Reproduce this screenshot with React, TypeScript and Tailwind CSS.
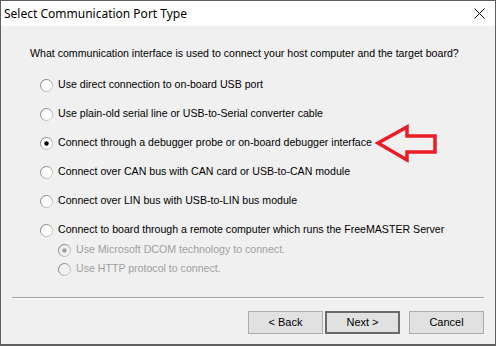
import React from "react";

function Radio({ checked = false, disabled = false }: { checked?: boolean; disabled?: boolean }) {
  return (
    <svg width="13" height="13" viewBox="0 0 13 13" className="shrink-0">
      <defs>
        <linearGradient id="rg" x1="0" y1="0" x2="1" y2="1">
          <stop offset="0" stopColor={disabled ? "#c8c8c8" : "#6d6d6d"} />
          <stop offset="1" stopColor={disabled ? "#e0e0e0" : "#d8d8d8"} />
        </linearGradient>
      </defs>
      <circle cx="6.5" cy="6.5" r="6" fill={disabled ? "#f0f0f0" : "#ffffff"} stroke="url(#rg)" strokeWidth="1" />
      {checked && <circle cx="6.5" cy="6.5" r="2.2" fill={disabled ? "#a0a0a0" : "#000000"} />}
    </svg>
  );
}

function Row({ label, checked, disabled, className }: { label: string; checked?: boolean; disabled?: boolean; className?: string }) {
  return (
    <div className={"flex items-center h-[16px] " + (className ?? "")}>
      <Radio checked={checked} disabled={disabled} />
      <span className={"ml-[5px] whitespace-nowrap " + (disabled ? "text-[#a0a0a0]" : "text-black")}>{label}</span>
    </div>
  );
}

export default function App() {
  return (
    <div
      className="relative w-[496px] h-[346px] border border-[#5f5f5f] border-b-2 bg-[#f0f0f0] flex flex-col overflow-hidden"
      style={{ fontFamily: '"Liberation Sans", Arial, sans-serif' }}
    >
      <div className="h-[25px] bg-white flex items-center justify-between shrink-0">
        <span className="ml-[3px] text-[12px] text-black" style={{ fontFamily: '"Noto Sans", "Open Sans", sans-serif' }}>
          Select Communication Port Type
        </span>
        <svg width="11" height="11" viewBox="0 0 11 11" className="mr-[10px]">
          <path d="M0.5 0.5 L10.5 10.5 M10.5 0.5 L0.5 10.5" stroke="#000" strokeWidth="1" />
        </svg>
      </div>
      <div className="flex-1 flex flex-col text-[10.6px]">
        <div className="mt-[20px] pl-[29px] h-[14px] leading-[14px] text-black whitespace-nowrap">
          What communication interface is used to connect your host computer and the target board?
        </div>
        <div className="flex flex-col pl-[39px]">
          <Row className="mt-[17px]" label="Use direct connection to on-board USB port" />
          <Row className="mt-[13px]" label="Use plain-old serial line or USB-to-Serial converter cable" />
          <Row className="mt-[13px]" label="Connect through a debugger probe or on-board debugger interface" checked />
          <Row className="mt-[13px]" label="Connect over CAN bus with CAN card or USB-to-CAN module" />
          <Row className="mt-[13px]" label="Connect over LIN bus with USB-to-LIN bus module" />
          <Row className="mt-[13px]" label="Connect to board through a remote computer which runs the FreeMASTER Server" />
          <div className="pl-[18px] flex flex-col">
            <Row className="mt-[4px]" label="Use Microsoft DCOM technology to connect." checked disabled />
            <Row className="mt-[3px]" label="Use HTTP protocol to connect." disabled />
          </div>
        </div>
        <div className="mt-auto mx-[11px] h-[2px] border-t border-[#a0a0a0] border-b border-b-white" />
        <div className="flex justify-end pr-[11px] mt-[12px] mb-[10px] text-[11px]">
          <button className="w-[75px] h-[23px] bg-[#e1e1e1] border border-[#adadad] text-black">&lt; Back</button>
          <button className="ml-[2px] w-[75px] h-[23px] bg-[#e1e1e1] border-2 border-[#6a6a6a] text-black">Next &gt;</button>
          <button className="ml-[9px] w-[75px] h-[23px] bg-[#e1e1e1] border border-[#adadad] text-black">Cancel</button>
        </div>
      </div>
      <svg className="absolute left-0 top-0 pointer-events-none" width="496" height="346">
        <polygon
          points="377,142 406,126 406,135 434,135 434,151 406,151 406,159"
          fill="none"
          stroke="#ed1c24"
          strokeWidth="3.5"
          strokeLinejoin="miter"
        />
      </svg>
    </div>
  );
}
